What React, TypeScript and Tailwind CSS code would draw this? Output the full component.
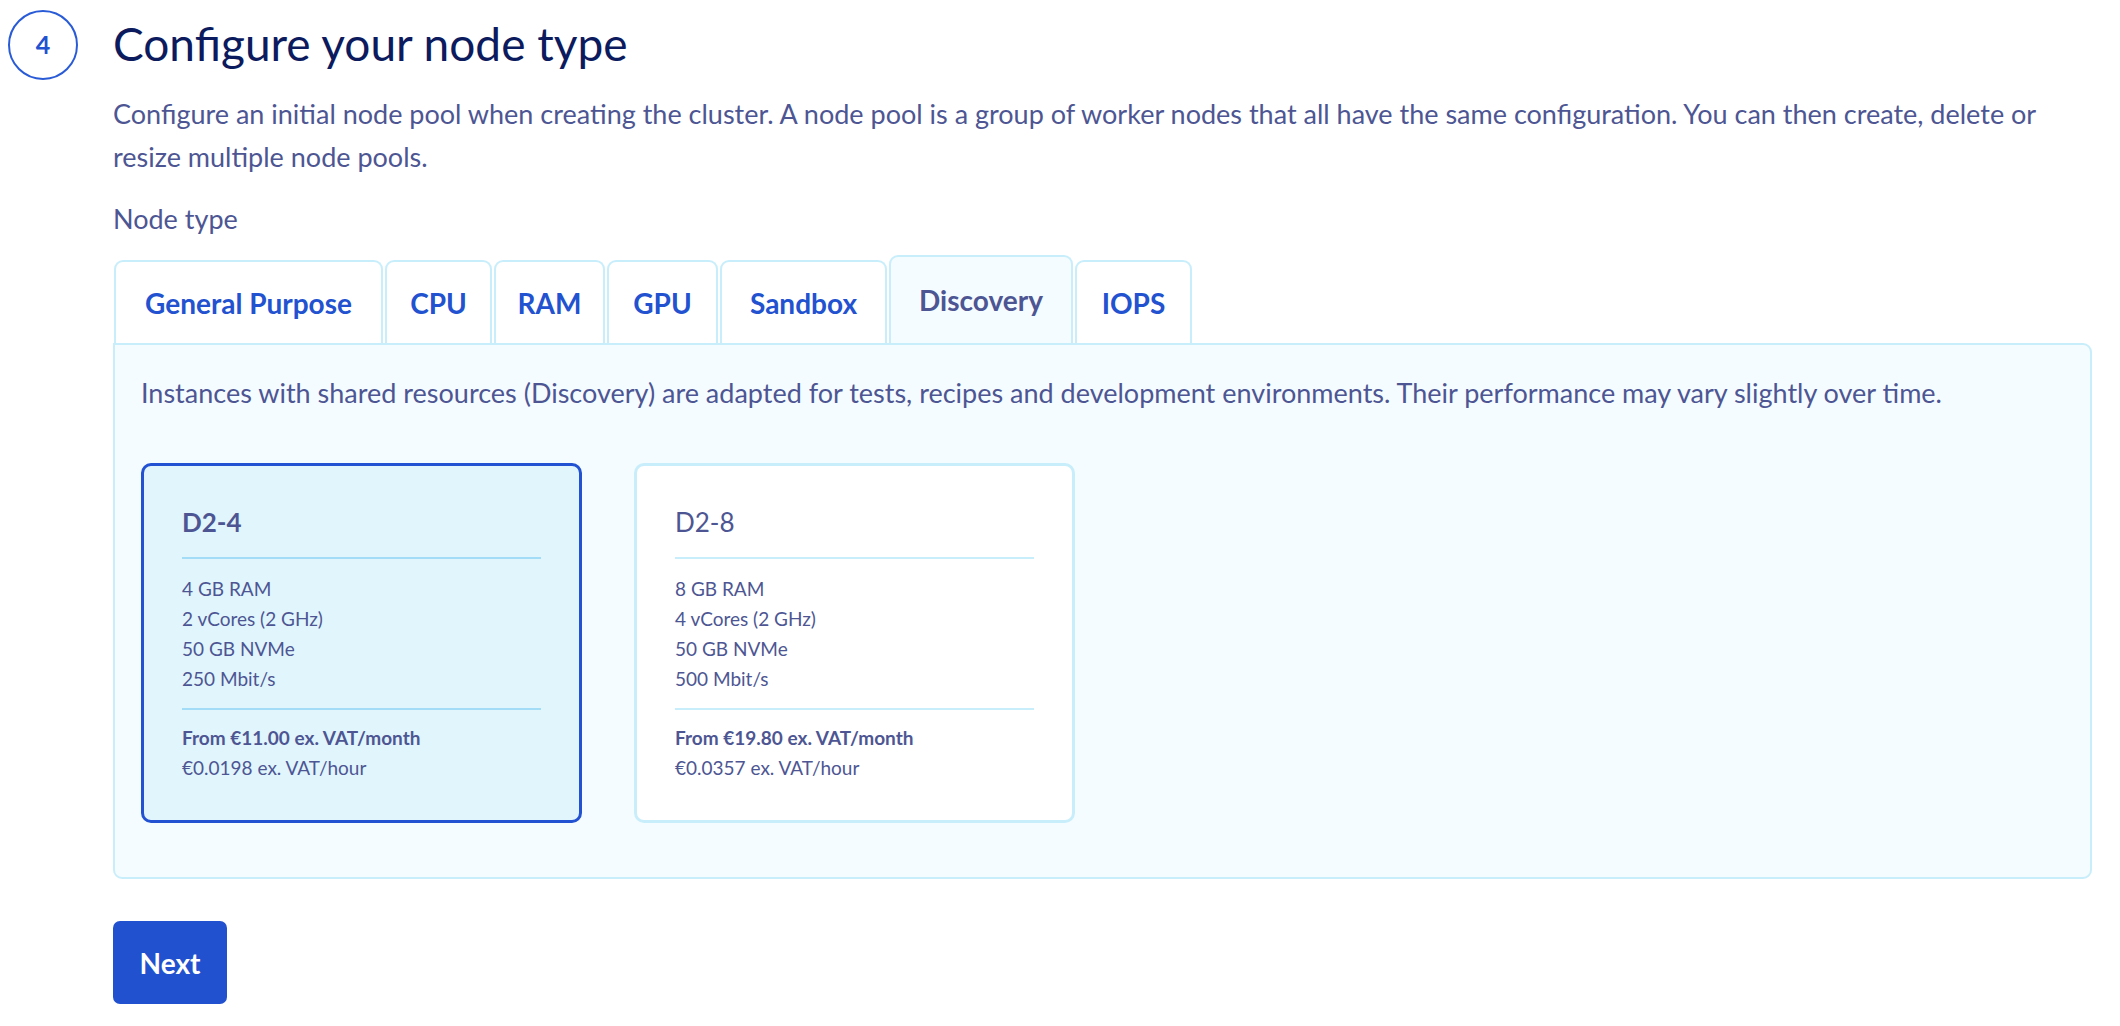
import { useState } from 'react';

const tabs = [
  { label: 'General Purpose', width: 'w-[269px]' },
  { label: 'CPU', width: 'w-[107px]' },
  { label: 'RAM', width: 'w-[111px]' },
  { label: 'GPU', width: 'w-[111px]' },
  { label: 'Sandbox', width: 'w-[167px]' },
  { label: 'Discovery', width: 'w-[184px]' },
  { label: 'IOPS', width: 'w-[117px]' },
];

const flavors = [
  {
    name: 'D2-4',
    specs: ['4 GB RAM', '2 vCores (2 GHz)', '50 GB NVMe', '250 Mbit/s'],
    month: 'From €11.00 ex. VAT/month',
    hour: '€0.0198 ex. VAT/hour',
  },
  {
    name: 'D2-8',
    specs: ['8 GB RAM', '4 vCores (2 GHz)', '50 GB NVMe', '500 Mbit/s'],
    month: 'From €19.80 ex. VAT/month',
    hour: '€0.0357 ex. VAT/hour',
  },
];

function FlavorCard({ flavor, selected, onSelect }: { flavor: (typeof flavors)[number]; selected: boolean; onSelect: () => void }) {
  return (
    <button
      onClick={onSelect}
      className={`w-[441px] rounded-[10px] border-[3px] px-[38px] pt-[37px] pb-[37px] text-left ${
        selected ? 'border-[#2252d2] bg-[#e1f5fd]' : 'border-[#c9eefb] bg-white'
      }`}
    >
      <div className={`text-[26px] leading-[39px] ${selected ? 'font-bold' : 'font-normal'}`}>{flavor.name}</div>
      <div className={`mt-[15px] h-[2px] ${selected ? 'bg-[#a3dcf7]' : 'bg-[#c9eefb]'}`} />
      <div className="mt-[15px] text-[19px] leading-[30px]">
        {flavor.specs.map((s) => (
          <div key={s}>{s}</div>
        ))}
      </div>
      <div className={`mt-[14px] h-[2px] ${selected ? 'bg-[#a3dcf7]' : 'bg-[#c9eefb]'}`} />
      <div className="mt-[13px] text-[19px] leading-[30px]">
        <div className="font-bold">{flavor.month}</div>
        <div>{flavor.hour}</div>
      </div>
    </button>
  );
}

export default function App() {
  const [activeTab, setActiveTab] = useState('Discovery');
  const [selected, setSelected] = useState('D2-4');

  return (
    <div className="min-h-screen bg-white pl-[8px] pr-[28px] pt-[10px] pb-[20px] font-['Lato',sans-serif] text-[#4d5693]">
      <div className="flex items-center gap-[35px]">
        <div className="flex size-[70px] items-center justify-center rounded-full border-2 border-[#2a5bd7] text-[25px] font-bold text-[#2252d0]">
          4
        </div>
        <h1 className="-mt-[3px] text-[46px] leading-[1.2] font-normal text-[#0c1a5e]">Configure your node type</h1>
      </div>

      <div className="pl-[105px]">
        <p className="mt-[12px] text-[27px] leading-[43px]">
          Configure an initial node pool when creating the cluster. A node pool is a group of worker nodes that all have the same configuration. You can then create, delete or resize multiple node pools.
        </p>

        <div className="mt-[19px] text-[27px] leading-[43px]">Node type</div>

        <div className="mt-[15px] flex items-end gap-[2px] pl-px">
          {tabs.map((tab) => {
            const active = tab.label === activeTab;
            return (
              <button
                key={tab.label}
                onClick={() => setActiveTab(tab.label)}
                className={`${tab.width} flex items-center justify-center rounded-t-[9px] border-2 border-b-0 border-[#c9eefb] text-[28px] font-bold ${
                  active ? 'h-[88px] bg-[#f5fcff] text-[#4d5693]' : 'h-[83px] bg-white text-[#2252d0]'
                }`}
              >
                {tab.label}
              </button>
            );
          })}
        </div>

        <div className="rounded-b-[9px] rounded-tr-[9px] border-2 border-[#c9eefb] bg-[#f5fcff] px-[26px] pt-[28px] pb-[54px]">
          <p className="text-[27px] leading-[39px]">
            Instances with shared resources (Discovery) are adapted for tests, recipes and development environments. Their performance may vary slightly over time.
          </p>
          <div className="mt-[51px] flex gap-[52px]">
            {flavors.map((f) => (
              <FlavorCard key={f.name} flavor={f} selected={selected === f.name} onSelect={() => setSelected(f.name)} />
            ))}
          </div>
        </div>

        <button className="mt-[42px] flex h-[83px] w-[114px] items-center justify-center rounded-[7px] bg-[#2251cf] text-[28px] font-bold text-white">
          Next
        </button>
      </div>
    </div>
  );
}
